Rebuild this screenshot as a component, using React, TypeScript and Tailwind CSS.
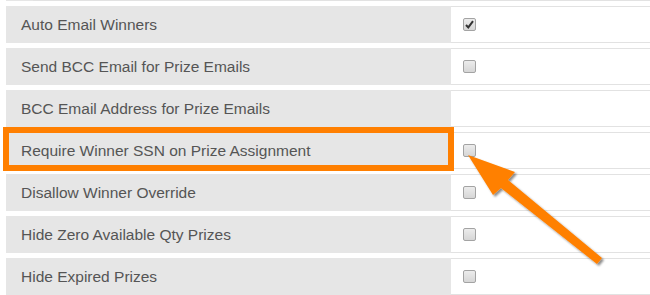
import React from "react";

const settings = [
  { label: "Auto Email Winners", type: "checkbox", checked: true },
  { label: "Send BCC Email for Prize Emails", type: "checkbox", checked: false },
  { label: "BCC Email Address for Prize Emails", type: "none", checked: false },
  { label: "Require Winner SSN on Prize Assignment", type: "checkbox", checked: false },
  { label: "Disallow Winner Override", type: "checkbox", checked: false },
  { label: "Hide Zero Available Qty Prizes", type: "checkbox", checked: false },
  { label: "Hide Expired Prizes", type: "checkbox", checked: false },
];

const Checkbox = ({ checked }: { checked: boolean }) => (
  <span className="flex h-[13px] w-[13px] items-center justify-center rounded-[2px] border border-[#a3a3a3] bg-gradient-to-b from-[#ececec] to-[#d6d6d6]">
    {checked && (
      <svg width="9" height="9" viewBox="0 0 9 9">
        <path d="M1 5 L3.3 7.4 L8 1.2" fill="none" stroke="#333" strokeWidth="2" />
      </svg>
    )}
  </span>
);

const App = () => {
  return (
    <div
      className="relative h-[295px] w-[650px] overflow-hidden bg-white"
      style={{ fontFamily: '"Liberation Sans", Arial, sans-serif' }}
    >
      <div className="flex flex-col gap-[5px] pl-[6px]">
        {/* tail of the row above */}
        <div className="flex h-px">
          <div className="w-[445px] bg-[#e6e6e6] pl-[27px]">
            <div className="h-px bg-[#e2e2e2]" />
          </div>
          <div className="flex-1 bg-[#e2e2e2]" />
        </div>

        {settings.map((s) => (
          <div key={s.label} className="flex h-[37px]">
            <div className="flex w-[445px] items-center bg-[#e6e6e6] pl-[15px] text-[15.5px] text-[#555]">
              {s.label}
            </div>
            <div className="flex flex-1 items-center border-y border-[#e2e2e2] bg-white pl-[12px]">
              {s.type === "checkbox" && <Checkbox checked={s.checked} />}
            </div>
          </div>
        ))}
      </div>

      {/* highlight box */}
      <div className="pointer-events-none absolute left-[3px] top-[127px] h-[44px] w-[451px] border-[6px] border-[#ff7f00]" />

      {/* arrow */}
      <svg className="pointer-events-none absolute left-0 top-0" width="650" height="295">
        <defs>
          <filter id="shadow" x="-20%" y="-20%" width="140%" height="140%">
            <feDropShadow dx="2" dy="2" stdDeviation="1.2" floodColor="#000" floodOpacity="0.45" />
          </filter>
        </defs>
        <polygon
          points="468,155 515,172 508,180 602,258 597,264 501,188 493,195"
          fill="#ff8000"
          filter="url(#shadow)"
        />
      </svg>
    </div>
  );
};

export default App;
